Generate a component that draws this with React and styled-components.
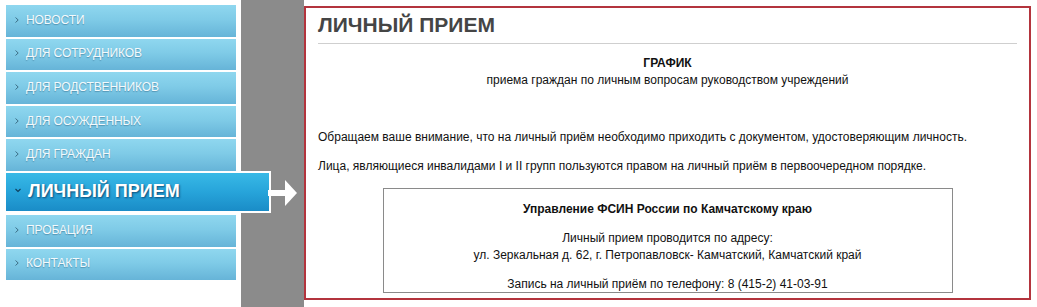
import React from "react";
import styled, { createGlobalStyle } from "styled-components";

const GlobalStyle = createGlobalStyle`
  html, body {
    margin: 0;
    padding: 0;
    background: #fff;
    font-family: "Liberation Sans", Arial, sans-serif;
  }
`;

const Page = styled.div`
  display: flex;
  width: 1037px;
  height: 307px;
  overflow: hidden;
`;

const Sidebar = styled.nav`
  width: 241px;
  flex-shrink: 0;
  padding: 5px 0 0 6px;
  box-sizing: border-box;
  display: flex;
  flex-direction: column;
  position: relative;
  z-index: 2;
`;

const MenuItem = styled.a`
  display: flex;
  align-items: center;
  gap: 7px;
  box-sizing: border-box;
  height: 31.6px;
  flex-shrink: 0;
  width: 230px;
  margin-bottom: 2px;
  padding: 0 0 2px 9px;
  background: linear-gradient(to bottom, #8fd7ef 0%, #7fcbe7 45%, #66b4d8 100%);
  color: #f3fafd;
  font-size: 12px;
  text-transform: uppercase;
  text-decoration: none;
  text-shadow: 0 1px 1px rgba(40, 90, 120, 0.45);
  letter-spacing: -0.1px;
`;

const ActiveItem = styled.a`
  position: relative;
  display: flex;
  align-items: center;
  gap: 7px;
  box-sizing: border-box;
  height: 42px;
  flex-shrink: 0;
  width: 267px;
  margin: -2px 0 2px -2px;
  padding-left: 9px;
  border: 2px solid #fff;
  background: linear-gradient(to bottom, #38b9e6 0%, #27a4da 50%, #1a8cc7 100%);
  color: #fff;
  font-size: 18px;
  font-weight: bold;
  text-transform: uppercase;
  text-decoration: none;
  text-shadow: 1px 1px 2px rgba(0, 40, 80, 0.7);
`;

const Pointer = styled.svg`
  position: absolute;
  left: calc(100% - 1px);
  top: 6px;
`;

const Gutter = styled.div`
  width: 63px;
  flex-shrink: 0;
  background: #8b8b8b;
`;

const Main = styled.main`
  flex: 1;
  display: flex;
  padding: 6px 6px 7px 0;
  box-sizing: border-box;
`;

const Panel = styled.section`
  flex: 1;
  border: 2px solid #b3343d;
  padding: 0 12px;
  overflow: hidden;
  color: #111;
  font-size: 12px;
  line-height: 17px;
`;

const Title = styled.h1`
  margin: 0;
  padding: 5px 0 6px;
  font-size: 21px;
  line-height: 24px;
  font-weight: bold;
  color: #454545;
  border-bottom: 1px solid #cfcfcf;
`;

const Center = styled.div`
  text-align: center;
  margin-top: ${(p) => p.$top || 0}px;
`;

const Strong = styled.div`
  font-weight: bold;
`;

const Para = styled.p`
  margin: ${(p) => p.$top}px 0 0;
`;

const InfoBox = styled.div`
  width: 570px;
  box-sizing: border-box;
  margin: 13px auto 0;
  border: 1px solid #8a8a8a;
  padding: 12px 10px 0;
  height: 105px;
  text-align: center;
`;

const Gap = styled.div`
  height: 12px;
`;

function RightChevron() {
  return (
    <svg width="4" height="6" viewBox="0 0 4 6">
      <path d="M0.5 0.5 L3.2 3 L0.5 5.5" fill="none" stroke="#3d6f86" strokeWidth="1" />
    </svg>
  );
}

function DownChevron() {
  return (
    <svg width="6" height="8" viewBox="0 0 6 8">
      <path d="M0.5 1 L3 3.5 L5.5 1" fill="none" stroke="#0f3f5c" strokeWidth="1.1" />
    </svg>
  );
}

const before = ["Новости", "Для сотрудников", "Для родственников", "Для осужденных", "Для граждан"];
const after = ["Пробация", "Контакты"];

export default function App() {
  return (
    <>
      <GlobalStyle />
      <Page>
        <Sidebar>
          {before.map((t) => (
            <MenuItem key={t} href="#">
              <RightChevron />
              {t}
            </MenuItem>
          ))}
          <ActiveItem href="#">
            <DownChevron />
            Личный прием
            <Pointer width="30" height="28" viewBox="0 0 30 28">
              <rect x="0" y="11" width="18" height="6" fill="#fff" />
              <polygon points="17,1 29,14 17,27" fill="#fff" />
            </Pointer>
          </ActiveItem>
          {after.map((t) => (
            <MenuItem key={t} href="#">
              <RightChevron />
              {t}
            </MenuItem>
          ))}
        </Sidebar>
        <Gutter />
        <Main>
          <Panel>
            <Title>ЛИЧНЫЙ ПРИЕМ</Title>
            <Center $top={11}>
              <Strong>ГРАФИК</Strong>
              <div>приема граждан по личным вопросам руководством учреждений</div>
            </Center>
            <Para $top={40}>
              Обращаем ваше внимание, что на личный приём необходимо приходить с документом, удостоверяющим личность.
            </Para>
            <Para $top={12}>
              Лица, являющиеся инвалидами I и II групп пользуются правом на личный приём в первоочередном порядке.
            </Para>
            <InfoBox>
              <Strong>Управление ФСИН России по Камчатскому краю</Strong>
              <Gap />
              <div>Личный прием проводится по адресу:</div>
              <div>ул. Зеркальная д. 62, г. Петропавловск- Камчатский, Камчатский край</div>
              <Gap />
              <div>Запись на личный приём по телефону: 8 (415-2) 41-03-91</div>
            </InfoBox>
          </Panel>
        </Main>
      </Page>
    </>
  );
}
